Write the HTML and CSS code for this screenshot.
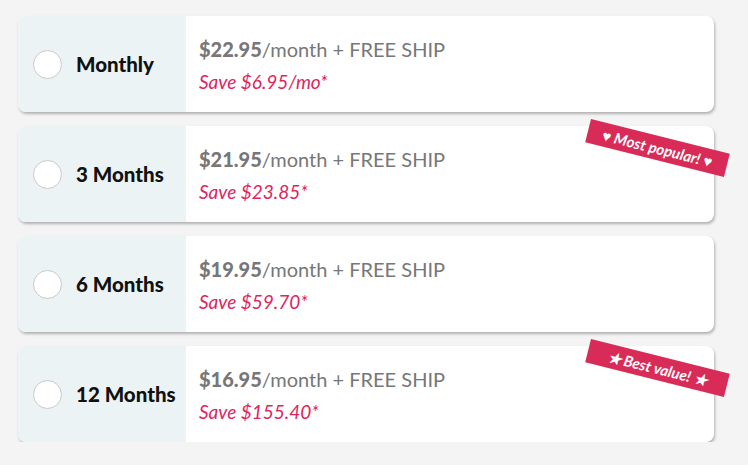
FILE: index.html
```html
<!DOCTYPE html>
<html>
<head>
<meta charset="utf-8">
<link rel="stylesheet" href="styles.css">
</head>
<body>
<div class="plans">
  <div class="plan">
    <div class="plan-left"><span class="radio"></span><span class="plan-name">Monthly</span></div>
    <div class="plan-right">
      <div class="price"><b>$22.95</b>/month + FREE SHIP</div>
      <div class="save">Save $6.95/mo*</div>
    </div>
  </div>
  <div class="plan">
    <div class="plan-left"><span class="radio"></span><span class="plan-name">3 Months</span></div>
    <div class="plan-right">
      <div class="price"><b>$21.95</b>/month + FREE SHIP</div>
      <div class="save">Save $23.85*</div>
    </div>
    <div class="badge">♥ Most popular! ♥</div>
  </div>
  <div class="plan">
    <div class="plan-left"><span class="radio"></span><span class="plan-name">6 Months</span></div>
    <div class="plan-right">
      <div class="price"><b>$19.95</b>/month + FREE SHIP</div>
      <div class="save">Save $59.70*</div>
    </div>
  </div>
  <div class="plan">
    <div class="plan-left"><span class="radio"></span><span class="plan-name">12 Months</span></div>
    <div class="plan-right">
      <div class="price"><b>$16.95</b>/month + FREE SHIP</div>
      <div class="save">Save $155.40*</div>
    </div>
    <div class="badge">★ Best value! ★</div>
  </div>
</div>
</body>
</html>
```

FILE: styles.css
```css
html, body {
  margin: 0;
  padding: 0;
  background: #f4f4f4;
  font-family: Lato, "Open Sans", sans-serif;
}
.plans {
  display: flex;
  flex-direction: column;
  gap: 14px;
  padding: 16px 34px 0 18px;
}
.plan {
  position: relative;
  display: flex;
  height: 96px;
  background: #fff;
  border-radius: 8px;
  box-shadow: 1px 2px 3px rgba(0, 0, 0, 0.28);
}
.plan-left {
  width: 168px;
  display: flex;
  align-items: center;
  background: #ecf3f5;
  border-radius: 8px 0 0 8px;
  padding-left: 15px;
  box-sizing: border-box;
}
.radio {
  width: 29px;
  height: 29px;
  border-radius: 50%;
  background: #fff;
  border: 1px solid #c9c9c9;
  box-sizing: border-box;
  flex: none;
}
.plan-name {
  margin-left: 14px;
  font-weight: 900;
  font-size: 20.5px;
  color: #111;
}
.plan-right {
  display: flex;
  flex-direction: column;
  justify-content: center;
  padding-left: 13px;
  padding-top: 2px;
  gap: 9px;
}
.price {
  font-size: 20px;
  line-height: 24px;
  color: #777;
}
.price b {
  font-weight: 900;
}
.save {
  font-size: 19px;
  line-height: 24px;
  font-style: italic;
  color: #e0245e;
}
.badge {
  position: absolute;
  left: 568px;
  top: 10px;
  width: 143px;
  height: 24px;
  background: #d92b58;
  color: #fff;
  font-size: 15px;
  font-weight: 700;
  font-style: italic;
  text-align: center;
  line-height: 24px;
  transform: rotate(14deg);
  white-space: nowrap;
}
```
